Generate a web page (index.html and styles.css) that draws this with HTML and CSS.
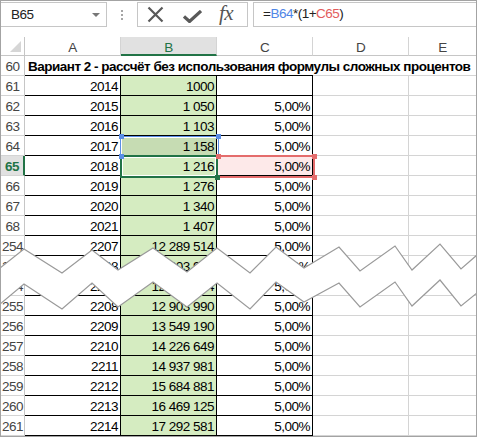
FILE: index.html
```html
<!DOCTYPE html>
<html>
<head>
<meta charset="utf-8">
<link rel="stylesheet" href="styles.css">
</head>
<body>
<div class="app">
  <div class="fbar">
    <div class="namebox"><span class="nb-text">B65</span><span class="nb-arrow"></span></div>
    <div class="grip"><i></i><i></i><i></i></div>
    <div class="fbtns">
      <svg class="ic-x" width="17" height="17" viewBox="0 0 17 17"><path d="M1.5 1.5 L15.5 15.5 M15.5 1.5 L1.5 15.5" stroke="#595959" stroke-width="2.2" fill="none"/></svg>
      <svg class="ic-check" width="19" height="13" viewBox="0 0 19 13"><path d="M1 6.5 L6.5 11.5 L18 1" stroke="#595959" stroke-width="3.2" fill="none" stroke-linejoin="miter"/></svg>
      <span class="fx">fx</span>
    </div>
    <div class="formula">=<span class="ref-b">B64</span>*(1+<span class="ref-c">C65</span>)</div>
  </div>
  <div class="sheet">
    <div class="corner"><span class="tri"></span></div>
    <div class="ch">A</div><div class="ch sel">B</div><div class="ch">C</div><div class="ch">D</div><div class="ch last">E</div>

    <div class="rh">60</div><div class="c title">Вариант 2 - рассчёт без использования формулы сложных процентов</div>

    <div class="rh">61</div><div class="c t n">2014</div><div class="c t n g">1000</div><div class="c t n"></div><div class="c"></div><div class="c last"></div>
    <div class="rh">62</div><div class="c t n">2015</div><div class="c t n g">1 050</div><div class="c t n">5,00%</div><div class="c"></div><div class="c last"></div>
    <div class="rh">63</div><div class="c t n">2016</div><div class="c t n g">1 103</div><div class="c t n">5,00%</div><div class="c"></div><div class="c last"></div>
    <div class="rh">64</div><div class="c t n">2017</div><div class="c t n gs">1 158</div><div class="c t n">5,00%</div><div class="c"></div><div class="c last"></div>
    <div class="rh act">65</div><div class="c t n">2018</div><div class="c t n g">1 216</div><div class="c t n pink">5,00%</div><div class="c"></div><div class="c last"></div>
    <div class="rh">66</div><div class="c t n">2019</div><div class="c t n g">1 276</div><div class="c t n">5,00%</div><div class="c"></div><div class="c last"></div>
    <div class="rh">67</div><div class="c t n">2020</div><div class="c t n g">1 340</div><div class="c t n">5,00%</div><div class="c"></div><div class="c last"></div>
    <div class="rh">68</div><div class="c t n">2021</div><div class="c t n g">1 407</div><div class="c t n">5,00%</div><div class="c"></div><div class="c last"></div>
    <div class="rh">254</div><div class="c t n">2207</div><div class="c t n g">12 289 514</div><div class="c t n">5,00%</div><div class="c"></div><div class="c last"></div>
    <div class="rh">255</div><div class="c t n">2208</div><div class="c t n g">12 903 990</div><div class="c t n">5,00%</div><div class="c"></div><div class="c last"></div>
    <div class="rh">254</div><div class="c t n">2207</div><div class="c t n g">12 289 514</div><div class="c t n">5,00%</div><div class="c"></div><div class="c last"></div>
    <div class="rh">255</div><div class="c t n">2208</div><div class="c t n g">12 903 990</div><div class="c t n">5,00%</div><div class="c"></div><div class="c last"></div>
    <div class="rh">256</div><div class="c t n">2209</div><div class="c t n g">13 549 190</div><div class="c t n">5,00%</div><div class="c"></div><div class="c last"></div>
    <div class="rh">257</div><div class="c t n">2210</div><div class="c t n g">14 226 649</div><div class="c t n">5,00%</div><div class="c"></div><div class="c last"></div>
    <div class="rh">258</div><div class="c t n">2211</div><div class="c t n g">14 937 981</div><div class="c t n">5,00%</div><div class="c"></div><div class="c last"></div>
    <div class="rh">259</div><div class="c t n">2212</div><div class="c t n g">15 684 881</div><div class="c t n">5,00%</div><div class="c"></div><div class="c last"></div>
    <div class="rh">260</div><div class="c t n">2213</div><div class="c t n g">16 469 125</div><div class="c t n">5,00%</div><div class="c"></div><div class="c last"></div>
    <div class="rh">261</div><div class="c t n">2214</div><div class="c t n g">17 292 581</div><div class="c t n">5,00%</div><div class="c"></div><div class="c last"></div>
  </div>

  <div class="box box-blue"></div>
  <div class="box box-green"></div>
  <div class="box box-red"></div>
  <span class="hd hd-blue hd1"></span>
  <span class="hd hd-blue hd2"></span>
  <span class="hd hd-blue hd3"></span>
  <span class="hd hd-red hd4"></span>
  <span class="hd hd-red hd5"></span>
  <span class="hd hd-red hd6"></span>
  <span class="hd hd-green hd7"></span>

  <svg class="tear" width="477" height="437" viewBox="0 0 477 437">
    <polygon fill="#ffffff" points="0,268 24,249 62,273 92,250 118,270 153,248 187,272 217,248 250,273 276,247 304,268 339,247 360,271 395,246 412,270 440,244 461,269 477,255 477,293 461,306 440,280 412,306 395,282 360,307 339,283 304,302 276,282 250,309 217,283 187,307 153,282 118,307 92,283 62,309 24,284 0,304"/>
    <polyline fill="none" stroke="#9a9a9a" stroke-width="1.2" points="0,268 24,249 62,273 92,250 118,270 153,248 187,272 217,248 250,273 276,247 304,268 339,247 360,271 395,246 412,270 440,244 461,269 477,255"/>
    <polyline fill="none" stroke="#9a9a9a" stroke-width="1.2" points="0,304 24,284 62,309 92,283 118,307 153,282 187,307 217,283 250,309 276,282 304,302 339,283 360,307 395,282 412,306 440,280 461,306 477,293"/>
  </svg>
</div>
</body>
</html>
```

FILE: styles.css
```css
* { box-sizing: border-box; }
html, body { margin: 0; padding: 0; background: #ffffff; }
body {
  font-family: "Liberation Sans", Arial, sans-serif;
  font-size: 13.5px;
  letter-spacing: -0.5px;
  color: #000000;
}
.app {
  position: relative;
  width: 477px;
  height: 437px;
  border: 1px solid #a3a3a3;
  overflow: hidden;
  background: #ffffff;
}

/* formula bar */
.fbar {
  display: flex;
  align-items: flex-start;
  height: 36px;
  padding-top: 1px;
}
.namebox {
  width: 106px;
  height: 25px;
  border: 1px solid #c6c6c6;
  border-left: none;
  display: flex;
  align-items: center;
  justify-content: space-between;
  padding: 0 6px 0 10px;
  color: #222;
}
.nb-arrow {
  width: 0; height: 0;
  border-left: 4px solid transparent;
  border-right: 4px solid transparent;
  border-top: 4px solid #777;
}
.grip {
  width: 30px;
  height: 25px;
  display: flex;
  flex-direction: column;
  align-items: center;
  justify-content: center;
  gap: 2px;
}
.grip i {
  display: block;
  width: 2px;
  height: 2px;
  background: #a6a6a6;
}
.fbtns {
  width: 111px;
  height: 25px;
  border: 1px solid #c6c6c6;
  display: flex;
  align-items: center;
  padding-left: 9px;
}
.ic-x { margin-right: 19px; }
.ic-check { margin-right: 17px; margin-top: 3px; }
.fx {
  font-family: "Liberation Serif", "Times New Roman", serif;
  font-style: italic;
  font-size: 21px;
  color: #555;
  letter-spacing: -0.5px;
  line-height: 1;
  margin-top: -2px;
}
.formula {
  flex: 1;
  height: 25px;
  margin-left: 5px;
  border: 1px solid #c6c6c6;
  border-right: none;
  padding-left: 9px;
  line-height: 22px;
  color: #222;
}
.ref-b { color: #4f86e6; }
.ref-c { color: #e25c5c; }

/* sheet */
.sheet {
  display: grid;
  grid-template-columns: 24px 96px 96px 96px 96px 67px;
  grid-template-rows: 19px;
  grid-auto-rows: 20px;
}
.corner {
  position: relative;
  border-right: 1px solid #c6c6c6;
  border-bottom: 1px solid #c6c6c6;
}
.tri {
  position: absolute;
  right: 3px;
  bottom: 3px;
  width: 0; height: 0;
  border-left: 11px solid transparent;
  border-bottom: 11px solid #d6d6d6;
}
.ch {
  border-right: 1px solid #d4d4d4;
  border-bottom: 1px solid #c6c6c6;
  text-align: center;
  color: #444;
  line-height: 20px;
  padding-top: 1px;
}
.ch.sel {
  background: #e1e1e1;
  color: #217346;
  border-bottom: 2px solid #217346;
}
.ch.last, .c.last { border-right: none; }
.rh {
  border-right: 1px solid #c6c6c6;
  border-bottom: 1px solid #d4d4d4;
  text-align: center;
  color: #444;
  line-height: 20px;
  padding-top: 1px;
  white-space: nowrap;
}
.rh.act {
  background: #e1e1e1;
  color: #217346;
  font-weight: bold;
  border-right: 2px solid #217346;
}
.c {
  border-right: 1px solid #d4d4d4;
  border-bottom: 1px solid #d4d4d4;
  line-height: 20px;
  padding-top: 1px;
  white-space: nowrap;
}
.c.t {
  border-right-color: #000;
  border-bottom-color: #000;
}
.c.n {
  text-align: right;
  padding-right: 2px;
}
.c.g { background: #d5ecc1; }
.c.gs { background: #c6dcb3; }
.c.pink { background: #fde9e9; }
.title {
  grid-column: span 5;
  border: none;
  font-weight: bold;
  padding-left: 3px;
  background:
    linear-gradient(#000, #000) 0 100% / 288px 1px no-repeat,
    linear-gradient(#d4d4d4, #d4d4d4) 0 100% / 100% 1px no-repeat;
}

/* selection overlays */
.box {
  position: absolute;
  pointer-events: none;
}
.box-blue {
  left: 119px; top: 135px; width: 99px; height: 21px;
  border: 1px solid #5a8de6;
  box-shadow: inset 0 0 0 1px #ffffff;
}
.box-green {
  left: 119px; top: 154px; width: 98px; height: 23px;
  border: 2px solid #217346;
  box-shadow: inset 0 0 0 1px #ffffff;
}
.box-red {
  left: 216px; top: 154px; width: 98px; height: 23px;
  border: 2px solid #e46c6c;
  border-left: none;
}
.hd {
  position: absolute;
  width: 5px;
  height: 5px;
}
.hd-blue { background: #5a8de6; }
.hd-red { background: #e46c6c; }
.hd-green { background: #217346; }
.hd1 { left: 118px; top: 133px; }
.hd2 { left: 215px; top: 133px; }
.hd3 { left: 118px; top: 153px; }
.hd4 { left: 215px; top: 153px; }
.hd5 { left: 311px; top: 153px; }
.hd6 { left: 311px; top: 174px; }
.hd7 { left: 214px; top: 174px; }

.tear {
  position: absolute;
  left: -1px;
  top: -1px;
}
```
